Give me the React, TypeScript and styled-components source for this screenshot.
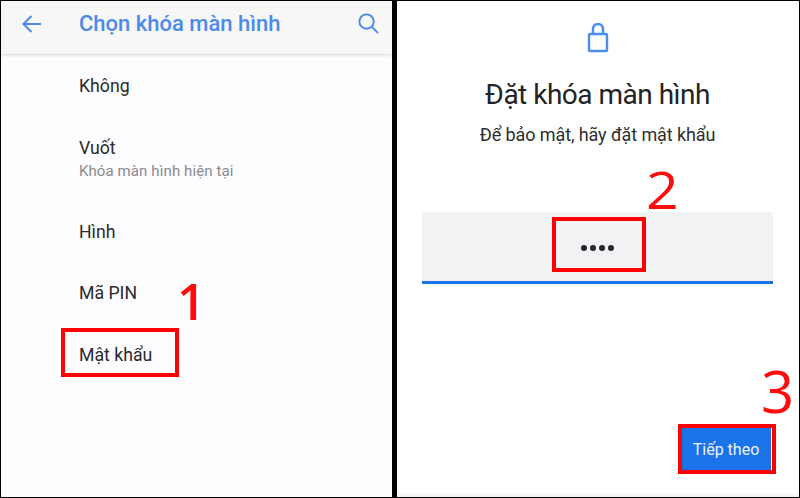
import styled, { createGlobalStyle } from "styled-components";

const GlobalStyle = createGlobalStyle`
  html, body {
    margin: 0;
    padding: 0;
    background: #000;
  }
  * {
    box-sizing: border-box;
  }
`;

const Page = styled.div`
  width: 800px;
  height: 498px;
  display: flex;
  gap: 5px;
  padding: 1px;
  background: #000;
  font-family: Roboto, "Liberation Sans", sans-serif;
  overflow: hidden;
`;

const LeftPanel = styled.section`
  position: relative;
  flex: none;
  width: 391px;
  background: #fdfcff;
`;

const RightPanel = styled.section`
  position: relative;
  flex: 1;
  display: flex;
  flex-direction: column;
  align-items: center;
  padding-right: 1px;
  background: #fff;
  box-shadow: inset 0 -6px 6px -6px rgba(0, 0, 0, 0.12);
`;

const AppBar = styled.header`
  height: 53px;
  display: flex;
  align-items: center;
  padding: 0 12px 8px 20px;
  background: #f7f7f8;
  box-shadow: 0 1px 3px rgba(0, 0, 0, 0.16);
  color: #4a8ae8;
`;

const AppBarTitle = styled.h1`
  flex: 1;
  margin: 0 0 0 36px;
  font-size: 22px;
  font-weight: 500;
  color: #4a8ae8;
`;

const List = styled.ul`
  list-style: none;
  margin: 0;
  padding: 20px 0 0 78px;
`;

const Item = styled.li<{ $height: number }>`
  height: ${(p) => p.$height}px;
  font-size: 17.7px;
  line-height: 24px;
  color: #2a2a2c;
`;

const ItemHint = styled.div`
  margin-top: 1px;
  font-size: 15px;
  line-height: 20px;
  letter-spacing: 0.1px;
  color: #8a8a8e;
`;

const Mark = styled.div<{ $x: number; $y: number; $w: number; $h: number }>`
  position: absolute;
  left: ${(p) => p.$x}px;
  top: ${(p) => p.$y}px;
  width: ${(p) => p.$w}px;
  height: ${(p) => p.$h}px;
  border: 4px solid #fe0000;
`;

const StepNumber = styled.span<{ $x: number; $y: number; $size: number; $weight: number; $stretch: number }>`
  position: absolute;
  left: ${(p) => p.$x}px;
  top: ${(p) => p.$y}px;
  font-family: "Open Sans", sans-serif;
  font-size: ${(p) => p.$size}px;
  line-height: 60px;
  font-weight: ${(p) => p.$weight};
  color: #fe0d0d;
  transform: scaleX(${(p) => p.$stretch});
  transform-origin: left center;
`;

const LockIcon = styled.svg`
  flex: none;
  margin-top: 22px;
  width: 26px;
  height: 30px;
  color: #4a8cf0;
`;

const Title = styled.h2`
  margin: 23px 0 0;
  font-size: 28px;
  line-height: 38px;
  font-weight: 400;
  letter-spacing: -0.5px;
  color: #232325;
`;

const Subtitle = styled.p`
  margin: 9px 0 0;
  font-size: 18px;
  line-height: 24px;
  letter-spacing: -0.1px;
  color: #2e2e30;
`;

const PasswordField = styled.div`
  flex: none;
  margin-top: 65px;
  width: 351px;
  height: 72px;
  display: flex;
  align-items: center;
  justify-content: center;
  gap: 3px;
  padding-top: 2px;
  background: #f1f2f4;
  border-bottom: 3px solid #1a73e8;
  border-radius: 3px 3px 0 0;
`;

const Dot = styled.i`
  width: 6px;
  height: 6px;
  border-radius: 50%;
  background: #26262a;
`;

const NextButton = styled.button`
  position: absolute;
  left: 284px;
  top: 426px;
  width: 90px;
  height: 45px;
  border: 0;
  border-radius: 0;
  background: #1a73e8;
  color: #eef4fd;
  font-family: Roboto, sans-serif;
  font-size: 16px;
`;

const App = () => (
  <>
    <GlobalStyle />
    <Page>
      <LeftPanel>
        <AppBar>
          <svg width="22" height="22" viewBox="0 0 22 22" fill="none" stroke="currentColor" strokeWidth="2">
            <path d="M20 11H2.5M10.5 3L2.5 11l8 8" />
          </svg>
          <AppBarTitle>Chọn khóa màn hình</AppBarTitle>
          <svg width="23" height="23" viewBox="0 0 24 24" fill="none" stroke="currentColor" strokeWidth="2">
            <circle cx="10" cy="10" r="7.5" />
            <path d="M15.5 15.5L22 22" />
          </svg>
        </AppBar>
        <List>
          <Item $height={62}>Không</Item>
          <Item $height={84}>
            Vuốt
            <ItemHint>Khóa màn hình hiện tại</ItemHint>
          </Item>
          <Item $height={61}>Hình</Item>
          <Item $height={62}>Mã PIN</Item>
          <Item $height={24}>Mật khẩu</Item>
        </List>
        <Mark $x={60} $y={327} $w={118} $h={49} />
        <StepNumber $x={176} $y={270} $size={50} $weight={600} $stretch={1}>1</StepNumber>
      </LeftPanel>
      <RightPanel>
        <LockIcon viewBox="0 0 26 30" fill="none" stroke="currentColor" strokeWidth="2.4">
          <rect x="4" y="11" width="18" height="17" rx="1" />
          <path d="M8 11V6a5 5 0 0 1 10 0v5" />
        </LockIcon>
        <Title>Đặt khóa màn hình</Title>
        <Subtitle>Để bảo mật, hãy đặt mật khẩu</Subtitle>
        <PasswordField>
          <Dot />
          <Dot />
          <Dot />
          <Dot />
        </PasswordField>
        <Mark $x={155} $y={216} $w={94} $h={55} />
        <StepNumber $x={249} $y={158} $size={52} $weight={400} $stretch={1.1}>2</StepNumber>
        <NextButton>Tiếp theo</NextButton>
        <Mark $x={281} $y={423} $w={98} $h={50} />
        <StepNumber $x={364} $y={360} $size={58} $weight={400} $stretch={1}>3</StepNumber>
      </RightPanel>
    </Page>
  </>
);

export default App;
